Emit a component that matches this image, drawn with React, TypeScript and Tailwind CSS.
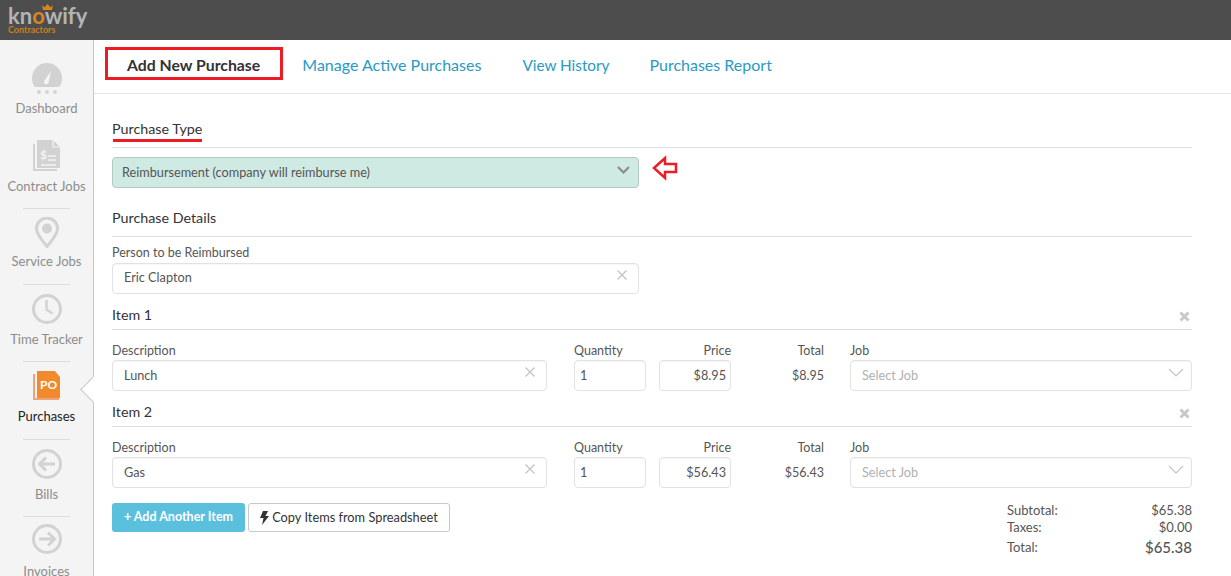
import type { ReactNode } from "react";

const font = "font-['Lato','Noto_Sans',sans-serif]";

function GaugeIcon() {
  return (
    <svg width="32" height="32" viewBox="0 0 32 32">
      <path d="M1 15a15 15 0 0 1 30 0c0 4-1 7-3 9H4c-2-2-3-5-3-9z" fill="#d2d2d2" />
      <path d="M13.500 17.500L20 8l-2.500 11.500a2.300 2.300 0 1 1-4-2z" fill="#f4f4f4" />
      <circle cx="8" cy="29" r="2" fill="#d2d2d2" />
      <circle cx="16" cy="29" r="2" fill="#d2d2d2" />
      <circle cx="24" cy="29" r="2" fill="#d2d2d2" />
    </svg>
  );
}

function ContractIcon() {
  return (
    <svg width="28" height="31" viewBox="0 0 28 31">
      <path d="M0 4h2v25h22v2H0z" fill="#d2d2d2" />
      <path d="M4 0h16l7 7v21H4z" fill="#d2d2d2" />
      <path d="M20 0v7h7" fill="none" stroke="#f4f4f4" strokeWidth="1.200" />
      <path d="M15 16h8M15 20h8M8 25h15" stroke="#f4f4f4" strokeWidth="1.500" />
      <text x="7" y="19" fontSize="12" fontWeight="700" fill="#f4f4f4" fontFamily="Lato, sans-serif">$</text>
    </svg>
  );
}

function PinIcon() {
  return (
    <svg width="24" height="31" viewBox="0 0 24 31">
      <path d="M12 29.500C8 24 1.500 18 1.500 11.500a10.500 10.500 0 0 1 21 0C22.500 18 16 24 12 29.500z" fill="none" stroke="#d2d2d2" strokeWidth="3" />
      <circle cx="12" cy="11.500" r="5" fill="#d2d2d2" />
    </svg>
  );
}

function ClockIcon() {
  return (
    <svg width="30" height="30" viewBox="0 0 30 30">
      <circle cx="15" cy="15" r="13.500" fill="none" stroke="#d2d2d2" strokeWidth="3" />
      <path d="M14.500 6v9.500l6 4" fill="none" stroke="#d2d2d2" strokeWidth="2.500" />
    </svg>
  );
}

function PoIcon() {
  return (
    <svg width="28" height="30" viewBox="0 0 28 30">
      <path d="M0 3h2v24h24v2H0z" fill="#f0a27a" />
      <path d="M4 0h18l5 6v21H4z" fill="#f08a2c" />
      <text x="7" y="18" fontSize="12" fontWeight="700" fill="#fff" fontFamily="Lato, sans-serif">PO</text>
    </svg>
  );
}

function ArrowCircle({ dir }: { dir: "left" | "right" }) {
  return (
    <svg width="30" height="30" viewBox="0 0 30 30">
      <circle cx="15" cy="15" r="13.500" fill="none" stroke="#d2d2d2" strokeWidth="3" />
      {dir === "left" ? (
        <path d="M23 15H8m6-6.500L7.500 15l6.500 6.500" fill="none" stroke="#d2d2d2" strokeWidth="3" />
      ) : (
        <path d="M7 15h15m-6-6.500l6.500 6.500-6.500 6.500" fill="none" stroke="#d2d2d2" strokeWidth="3" />
      )}
    </svg>
  );
}

function Logo() {
  return (
    <div className="relative ml-[8px] mt-[5px] w-[82px] leading-none">
      <div className="text-[22px] font-bold leading-[21px] text-[#b4b4b4]">
        kn<span className="text-[#d9861f]">o</span>wify
      </div>
      <svg className="absolute left-[33px] top-[-1px]" width="13" height="6" viewBox="0 0 13 6">
        <path d="M1 1l2.500 2.500L6.500 0l3 3.500L12 1l-1 5H2z" fill="#d9861f" />
      </svg>
      <div className="text-[9px] font-bold leading-[8px] text-[#c97f1c]">Contractors</div>
    </div>
  );
}

function NavItem({
  icon,
  label,
  active,
  sep,
  h,
  labelMt,
}: {
  icon: ReactNode;
  label: string;
  active?: boolean;
  sep?: boolean;
  h: string;
  labelMt: string;
}) {
  return (
    <div className={`relative flex flex-col items-center ${h}`}>
      {sep && <div className="absolute top-0 left-[23px] h-px w-[47px] bg-[#dcdcdc]" />}
      <div className="mt-[8px] flex h-[33px] items-center justify-center">{icon}</div>
      <div className={`${labelMt} text-[13px] leading-[16px] ${active ? "text-[#222]" : "text-[#8c8c8c]"}`}>{label}</div>
    </div>
  );
}

function Sidebar() {
  return (
    <aside className="relative w-[94px] shrink-0 border-r border-[#c8c8c8] bg-[#f4f4f4] pt-[14px]">
      <NavItem h="h-[77px]" labelMt="mt-[5px]" icon={<GaugeIcon />} label="Dashboard" />
      <NavItem h="h-[77px]" labelMt="mt-[6px]" icon={<ContractIcon />} label="Contract Jobs" />
      <NavItem h="h-[76px]" labelMt="mt-[4px]" sep icon={<PinIcon />} label="Service Jobs" />
      <NavItem h="h-[77px]" labelMt="mt-[6px]" sep icon={<ClockIcon />} label="Time Tracker" />
      <NavItem h="h-[78px]" labelMt="mt-[6px]" sep active icon={<PoIcon />} label="Purchases" />
      <NavItem h="h-[77px]" labelMt="mt-[6px]" sep icon={<ArrowCircle dir="left" />} label="Bills" />
      <NavItem h="h-[60px]" labelMt="mt-[9px]" sep icon={<ArrowCircle dir="right" />} label="Invoices" />
      <div className="absolute left-[84px] top-[340px] size-[19px] rotate-45 border-b border-l border-[#c8c8c8] bg-white" />
    </aside>
  );
}

function Tabs() {
  return (
    <div className="relative flex h-[54px] shrink-0 items-center border-b border-[#e6e6e6] pb-[4px] text-[16px] text-[#2a9ac4]">
      <div className="ml-[33px] text-[15.800px] font-bold text-[#333]">Add New Purchase</div>
      <div className="ml-[42px]">Manage Active Purchases</div>
      <div className="ml-[41px] pt-[2px] text-[15.300px]">View History</div>
      <div className="ml-[40px]">Purchases Report</div>
      {/* red annotation */}
      <div className="absolute left-[11px] top-[7px] h-[33px] w-[178px] border-[3px] border-[#ed1c24]" />
    </div>
  );
}

function SectionHead({ title, className, remove }: { title: string; className: string; remove?: boolean }) {
  return (
    <div className={`flex items-end justify-between border-b border-[#dedede] ${className}`}>
      <span className="text-[14.300px] leading-[17px] text-[#333]">{title}</span>
      {remove && (
        <svg className="mb-[1px] mr-[2px]" width="11" height="11" viewBox="0 0 11 11">
          <path d="M1.500 1.500l8 8m0-8l-8 8" stroke="#c8c8c8" strokeWidth="3" />
        </svg>
      )}
    </div>
  );
}

function ThinX() {
  return (
    <svg className="mb-[6px]" width="10" height="10" viewBox="0 0 10 10">
      <path d="M.5.500l9 9m0-9l-9 9" stroke="#c4c4c4" strokeWidth="1.300" fill="none" />
    </svg>
  );
}

const inputBox = "flex items-center rounded-[4px] border border-[#e2e2e2] bg-white pb-[1px] text-[12.700px] text-[#555] shadow-[inset_0_1px_1px_rgba(0,0,0,0.04)]";

function ItemRow({ title, desc, price, total }: { title: string; desc: string; price: string; total: string }) {
  return (
    <div className="mt-[6px]">
      <SectionHead title={title} className="h-[30px] pb-[6px]" remove />
      <div className="mt-[13px] flex text-[12.500px] leading-[16px] text-[#555]">
        <div className="w-[435px]">
          <div>Description</div>
          <div className={`${inputBox} mt-[1px] h-[31px] justify-between pl-[11px] pr-[11px]`}>
            {desc}
            <ThinX />
          </div>
        </div>
        <div className="ml-[27px] w-[72px]">
          <div>Quantity</div>
          <div className={`${inputBox} mt-[1px] h-[31px] pl-[5px]`}>1</div>
        </div>
        <div className="ml-[13px] w-[72px] text-right">
          <div>Price</div>
          <div className={`${inputBox} mt-[1px] h-[31px] justify-end pr-[4px]`}>{price}</div>
        </div>
        <div className="w-[93px] text-right">
          <div>Total</div>
          <div className="mt-[9px]">{total}</div>
        </div>
        <div className="ml-[26px] w-[342px]">
          <div>Job</div>
          <div className={`${inputBox} mt-[1px] h-[31px] justify-between pl-[11px] pr-[7px] text-[#b0b0b0]`}>
            Select Job
            <svg className="mb-[5px]" width="16" height="9" viewBox="0 0 16 9">
              <path d="M1 1l7 7 7-7" fill="none" stroke="#c4c4c4" strokeWidth="1.200" />
            </svg>
          </div>
        </div>
      </div>
    </div>
  );
}

function Content() {
  return (
    <div className="relative ml-[18px] w-[1080px] pt-[25px]">
      <SectionHead title="Purchase Type" className="h-[29px] pb-[10px]" />
      <div className="mt-[9px] flex h-[31px] w-[527px] items-center justify-between rounded-[4px] border border-[#b5c9c3] bg-[#cfe9e3] pl-[9px] pr-[8px] text-[12.700px] text-[#555]">
        Reimbursement (company will reimburse me)
        <svg className="mb-[5px]" width="13" height="8" viewBox="0 0 13 8">
          <path d="M1 1l5.500 5.500L12 1" fill="none" stroke="#8c8c8c" strokeWidth="2.200" />
        </svg>
      </div>
      <SectionHead title="Purchase Details" className="mt-[16px] h-[33px] pb-[10px]" />
      <div className="mt-[8px] text-[12.500px] leading-[16px] text-[#555]">Person to be Reimbursed</div>
      <div className={`${inputBox} mt-[2px] h-[31px] w-[527px] justify-between pl-[11px] pr-[11px]`}>
        Eric Clapton
        <ThinX />
      </div>
      <ItemRow title="Item 1" desc="Lunch" price="$8.95" total="$8.95" />
      <ItemRow title="Item 2" desc="Gas" price="$56.43" total="$56.43" />
      <div className="flex items-start justify-between">
        <div className="mt-[15px] flex gap-[3px]">
          <button className="h-[29px] w-[133px] rounded-[3px] bg-[#5bc0de] text-[12.500px] font-bold text-white">+ Add Another Item</button>
          <button className="flex h-[29px] w-[202px] items-center justify-center gap-[3px] rounded-[3px] border border-[#c8c8c8] bg-white text-[12.800px] text-[#333]">
            <svg width="9" height="14" viewBox="0 0 9 14">
              <path d="M3 0h5L5.500 5H9L2 14l1.500-7H0z" fill="#333" />
            </svg>
            Copy Items from Spreadsheet
          </button>
        </div>
        <div className="mt-[14px] w-[185px] text-[13px] leading-[17px] text-[#555]">
          <div className="flex justify-between"><span>Subtotal:</span><span>$65.38</span></div>
          <div className="flex justify-between"><span>Taxes:</span><span>$0.00</span></div>
          <div className="mt-[3px] flex items-center justify-between"><span>Total:</span><span className="text-[15px] font-medium">$65.38</span></div>
        </div>
      </div>
      {/* red annotations */}
      <div className="absolute left-[1px] top-[45px] h-[3px] w-[89px] bg-[#ed1c24]" />
      <svg className="absolute left-[540px] top-[61px]" width="26" height="26" viewBox="0 0 26 26">
        <path d="M2 13L13 3v6h11v8H13v6z" fill="#fff" stroke="#ed1c24" strokeWidth="2.500" />
      </svg>
    </div>
  );
}

export default function App() {
  return (
    <div className={`flex h-[576px] w-[1231px] flex-col overflow-hidden bg-white ${font}`}>
      <header className="h-[40px] shrink-0 bg-[#4d4d4d]">
        <Logo />
      </header>
      <div className="flex min-h-0 flex-1">
        <Sidebar />
        <main className="min-w-0 flex-1">
          <Tabs />
          <Content />
        </main>
      </div>
    </div>
  );
}
